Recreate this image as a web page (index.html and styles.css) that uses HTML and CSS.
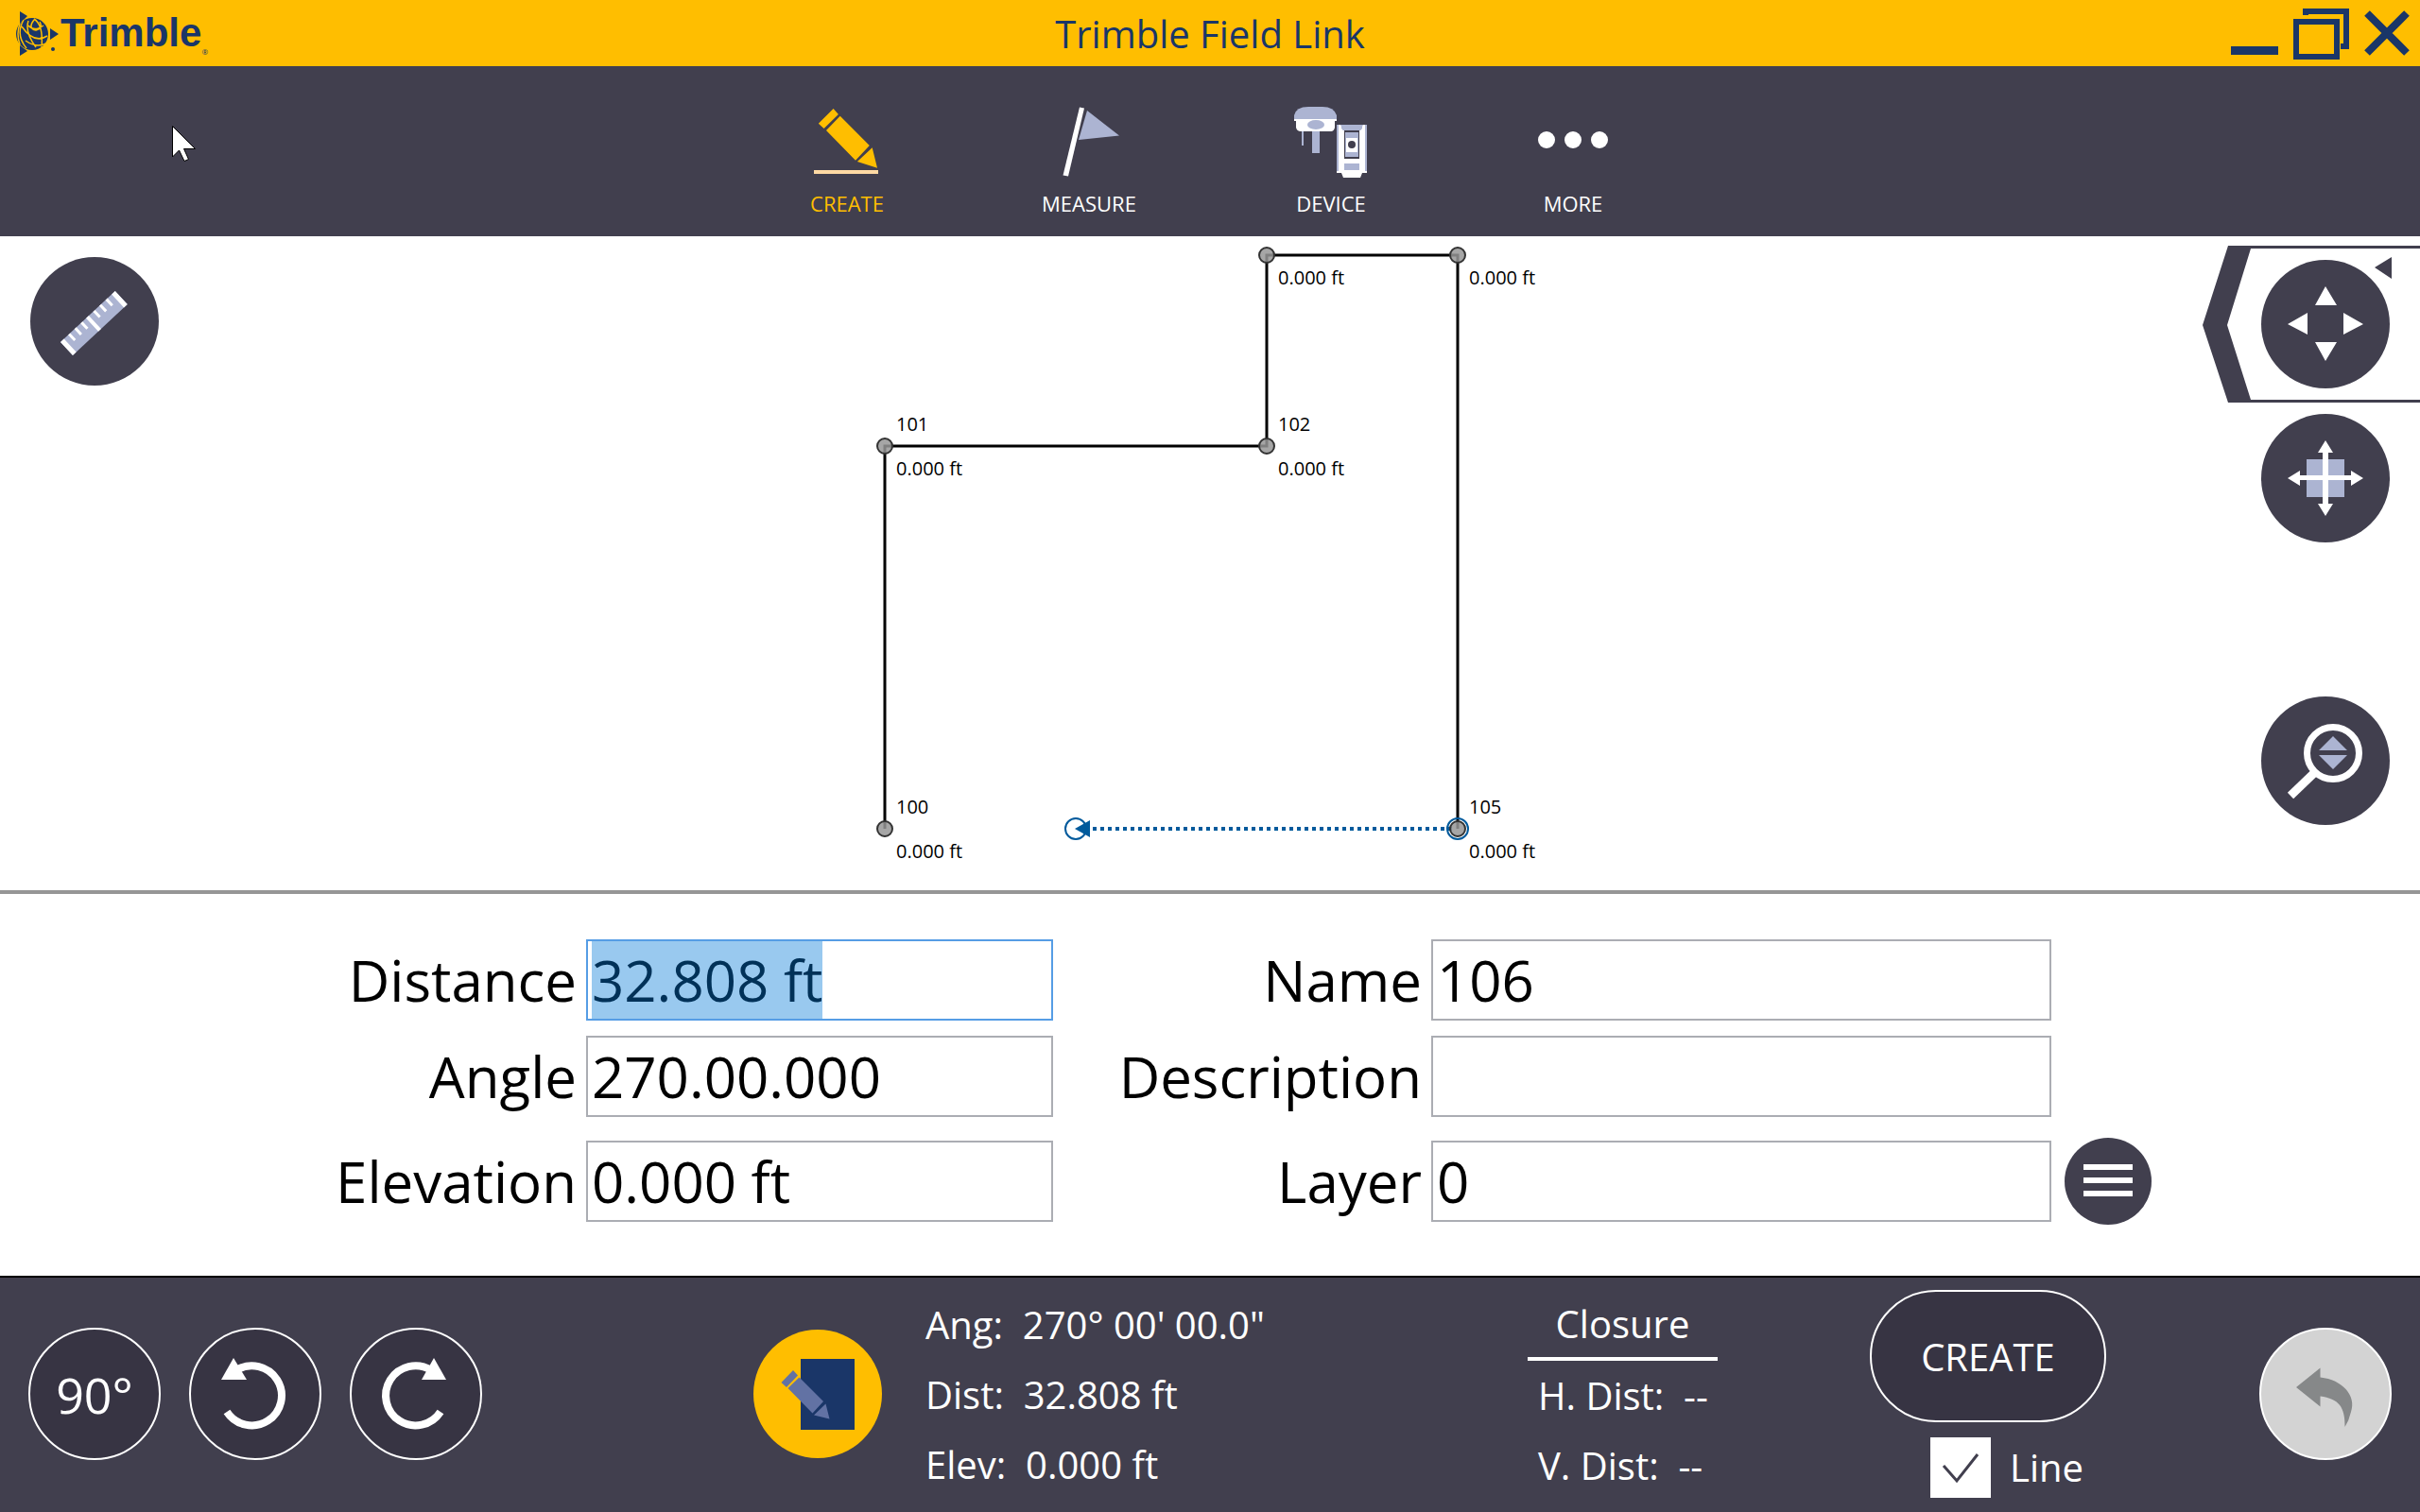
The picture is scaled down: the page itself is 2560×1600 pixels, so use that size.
FILE: index.html
```html
<!DOCTYPE html>
<html lang="en">
<head>
<meta charset="utf-8">
<title>Trimble Field Link</title>
<link rel="stylesheet" href="styles.css">
</head>
<body>
<header class="titlebar">
  <div class="brand">
    <svg class="brand-globe" width="48" height="50" viewBox="0 0 48 50" aria-hidden="true">
      <path class="navy" d="M5 2 13 7 5 15ZM46 26 37 20V32ZM5 49V38L13 44Z"/>
      <circle class="navy" cx="18" cy="26" r="17"/>
      <g class="globe-lines">
        <path d="M5 15Q1 26 5 37M9 11Q0 27 12 41M7 18Q20 37 34 28M11 33Q22 41 33 36M14 12Q10 24 22 40M14 17Q20 24 30 17M20 10Q30 16 28 40M20 11Q13 20 22 22Q30 20 26 13"/>
      </g>
      <circle class="navy" cx="40" cy="42" r="2"/>
    </svg>
    <span class="brand-name">Trimble</span><span class="brand-mark">®</span>
  </div>
  <h1 class="app-title">Trimble Field Link</h1>
  <div class="window-controls">
    <button class="window-button" aria-label="Minimize"><svg width="52" height="60" viewBox="0 0 52 60"><path class="navy" d="M0 44h50v9H0z"/></svg></button>
    <button class="window-button" aria-label="Restore"><svg width="60" height="60" viewBox="0 0 60 60"><g class="win-line"><path d="M3 18H46V55H3Z"/><path d="M13 11V7H56V44H50"/></g></svg></button>
    <button class="window-button" aria-label="Close"><svg width="50" height="60" viewBox="0 0 50 60"><path class="win-line close" d="M4 9 46 51M46 9 4 51"/></svg></button>
  </div>
</header>

<nav class="toolbar">
  <button class="nav-item active">
    <svg width="80" height="80" viewBox="0 0 80 80" fill="#ffbe00"><path d="M25.6 7 9.8 22.7 15.6 28 30.9 13ZM32.7 14.7 18 30 49 61.7 63.8 46ZM66.7 48.3 50.9 63 72 69.7Z"/><path fill="#fdd9a3" d="M5 72h68v4H5z"/></svg>
    <span>CREATE</span>
  </button>
  <button class="nav-item">
    <svg width="80" height="80" viewBox="0 0 80 80"><path fill="#fff" d="M30 5.500 35 6.500 18 78.500 12.500 77.500Z"/><path fill="#acb4d2" d="M38 9 72 35.500 29 40Z"/></svg>
    <span>MEASURE</span>
  </button>
  <button class="nav-item">
    <svg width="80" height="80" viewBox="0 0 80 80">
      <path fill="#acb4d2" d="M1 18V14Q3 5 16 5H31Q43 5 46 14V18Z"/>
      <path fill="#fff" d="M1 18H46V20H44V27Q43 31 40 31H8Q4 31 3 27V20H1Z"/>
      <ellipse fill="#acb4d2" cx="24" cy="24" rx="9" ry="5"/>
      <path fill="#acb4d2" d="M20 31h8v23h-8zM9 31h2v15H9z"/>
      <path fill="#acb4d2" d="M46 24H78V74H46Z"/>
      <path fill="#fff" d="M48 24H51V28L53 30H71L73 28V24H76V74H48Z"/>
      <path fill="#acb4d2" d="M50 24h24l-3 6H53zM54 31h16v29H54zM54 65h16v7H54z"/>
      <path fill="#fff" d="M56 38h12v15H56zM54 60h16v3H54z"/>
      <path fill="#413f4e" d="M54 30h16v2H54zM54 58h16v2H54zM54 32h1v26h-1zM69 32h1v26h-1z"/>
      <ellipse fill="#413f4e" cx="62" cy="45" rx="4" ry="4"/>
      <path fill="#fff" d="M46 73h32v2h-5l-2 5H53l-2-5h-5z"/>
    </svg>
    <span>DEVICE</span>
  </button>
  <button class="nav-item">
    <svg width="80" height="80" viewBox="0 0 80 80" fill="#fff"><circle cx="12" cy="40" r="9"/><circle cx="40" cy="40" r="9"/><circle cx="68" cy="40" r="9"/></svg>
    <span>MORE</span>
  </button>
  <svg class="pointer" width="26" height="39" viewBox="0 0 26 39" aria-hidden="true"><path d="M.5.5V33L7.500 26 13 37.500 17.500 35.500 12.500 24.500H24.500Z"/></svg>
</nav>

<main class="map">
  <div class="map-left">
    <button class="round" aria-label="Measure distance">
      <svg width="136" height="136" viewBox="0 0 136 136"><g transform="translate(32 90) rotate(-43)"><path fill="#acb4d2" d="M0 0h79v19H0z"/><path fill="#fff" d="M0 0h5v19H0zM74 0h5v19h-5zM37 0h4v19h-4zM11 0h3v9h-3zM20 0h3v9h-3zM29 0h3v9h-3zM47 0h3v9h-3zM56 0h3v9h-3zM65 0h3v9h-3z"/></g></svg>
    </button>
  </div>
  <svg class="plan" width="760" height="692" viewBox="0 0 760 692">
    <path class="plan-line" d="M36 627V222H440V20H642V627"/>
    <path class="plan-next" d="M636 627H253"/>
    <g class="plan-ring"><circle cx="238" cy="627" r="11"/><circle cx="642" cy="627" r="11"/></g>
    <path class="plan-arrow" d="M237 627 253 618V636Z"/>
    <g class="plan-point"><circle cx="36" cy="627" r="8"/><circle cx="36" cy="222" r="8"/><circle cx="440" cy="222" r="8"/><circle cx="440" cy="20" r="8"/><circle cx="642" cy="20" r="8"/><circle cx="642" cy="627" r="8"/></g>
    <g class="plan-text">
      <text x="48" y="611">100</text><text x="48" y="658">0.000 ft</text>
      <text x="48" y="206">101</text><text x="48" y="253">0.000 ft</text>
      <text x="452" y="206">102</text><text x="452" y="253">0.000 ft</text>
      <text x="452" y="51">0.000 ft</text>
      <text x="654" y="51">0.000 ft</text>
      <text x="654" y="611">105</text><text x="654" y="658">0.000 ft</text>
    </g>
  </svg>
  <div class="map-right">
    <div class="flyout">
      <svg class="flyout-frame" width="230" height="166" viewBox="0 0 230 166" fill="#413f4e" aria-hidden="true"><path d="M27 0H230V3H51L26 84 51 163H230V166H27L0 84ZM182 23 200 12V35Z"/></svg>
      <button class="round" aria-label="Pan">
        <svg width="136" height="136" viewBox="0 0 136 136" fill="#fff"><path d="M68 28 80 48H57ZM68 107 57 87H80ZM28 68 49 56V79ZM108 68 87 56V79Z"/></svg>
      </button>
    </div>
    <button class="round" aria-label="Zoom extents">
      <svg width="136" height="136" viewBox="0 0 136 136" fill="#fff"><path fill="#acb4d2" d="M48 48h40v40H48z"/><path d="M68 28 76 41H71V65H95V60L108 68 95 76V70H71V95H76L68 108 60 95H65V70H41V76L28 68 41 60V65H65V41H60Z"/></svg>
    </button>
    <button class="round zoom" aria-label="Zoom">
      <svg width="136" height="136" viewBox="0 0 136 136"><g fill="none" stroke="#fff"><circle cx="76" cy="60" r="27.500" stroke-width="7"/><path stroke-width="9" d="M31 105 56 81"/></g><path fill="#acb4d2" d="M76 42 91 57H61ZM76 77 61 62H91Z"/></svg>
    </button>
  </div>
</main>

<form class="fields">
  <label class="first" for="distance">Distance</label><input class="field" id="distance" value="32.808 ft" autofocus>
  <label for="name">Name</label><input class="field" id="name" value="106">
  <label class="first" for="angle">Angle</label><input class="field" id="angle" value="270.00.000">
  <label for="description">Description</label><input class="field" id="description">
  <label class="first" for="elevation">Elevation</label><input class="field" id="elevation" value="0.000 ft">
  <label for="layer">Layer</label><input class="field" id="layer" value="0">
  <button type="button" class="layers" aria-label="Layers">
    <svg width="92" height="92" viewBox="0 0 92 92" fill="#fff"><path d="M20 28h52v6H20zM20 42h52v6H20zM20 56h52v6H20z"/></svg>
  </button>
</form>

<footer class="actions">
  <div class="rotate">
    <button class="ring">90°</button>
    <button class="ring" aria-label="Rotate counterclockwise">
      <svg width="136" height="136" viewBox="2 2 136 136"><path fill="none" stroke="#fff" stroke-width="8" d="M40 89A31.500 31.500 0 1 0 50 45"/><path fill="#fff" d="M47 32 34 55H61Z"/></svg>
    </button>
    <button class="ring" aria-label="Rotate clockwise">
      <svg width="136" height="136" viewBox="2 2 136 136"><path fill="none" stroke="#fff" stroke-width="8" d="M96 89A31.500 31.500 0 1 1 86 45"/><path fill="#fff" d="M89 32 102 55H76Z"/></svg>
    </button>
  </div>
  <div class="readout">
    <button class="sketch" aria-label="Sketch mode">
      <svg width="136" height="136" viewBox="0 0 136 136"><path fill="#1a3668" d="M50 31h57v75H50z"/><path fill="#ffbe00" d="M47 47 50 50 37 64 34 61Z"/><path fill="#6272a4" d="M42 43 29.500 56 35 61 47 48.500ZM48.500 50.500 36.500 62 62.500 88.500 74 76ZM76.500 78.500 64 90.500 80.500 94.500Z"/></svg>
    </button>
    <div class="lines">
      <div class="line">Ang:  270° 00' 00.0"</div>
      <div class="line">Dist:  32.808 ft</div>
      <div class="line">Elev:  0.000 ft</div>
    </div>
  </div>
  <div class="closure">
    <h2>Closure</h2>
    <div class="line">H. Dist:  --</div>
    <div class="line">V. Dist:  --</div>
  </div>
  <div class="create">
    <button class="create-button">CREATE</button>
    <label class="line-option"><input type="checkbox" class="check" checked>Line</label>
  </div>
  <button class="ring undo" aria-label="Undo">
    <svg width="136" height="136" viewBox="2 2 136 136"><path fill="#868889" d="M39 63 64.500 42.500V52.500C88 55 103 72 97 89Q95 98 90.500 105C91 84 84 75 64.500 72.500V83.500Z"/></svg>
  </button>
</footer>
<script src="app.js"></script>
</body>
</html>
```
FILE: styles.css
```css
* { box-sizing: border-box; }

body {
  margin: 0;
  min-height: 100vh;
  display: flex;
  flex-direction: column;
  background: #fff;
  color: #000;
  font-family: "Open Sans", "Noto Sans", sans-serif;
  font-size: 40px;
}

button {
  padding: 0;
  border: 0;
  background: none;
  color: inherit;
  font: inherit;
}

svg { display: block; }

.navy { fill: #1a3668; }

/* Title bar */
.titlebar {
  height: 70px;
  display: grid;
  grid-template-columns: 1fr auto 1fr;
  align-items: center;
  padding: 0 10px;
  background: #ffbe00;
  color: #1a3668;
}
.brand { display: flex; align-items: center; padding-left: 6px; }
.globe-lines path { fill: none; stroke: #ffbe00; stroke-width: 1.5; }
.brand-name {
  font: bold 42px/50px "Liberation Sans", sans-serif;
}
.brand-mark {
  align-self: flex-end;
  font-size: 8px;
}
.app-title { margin: 0; font-size: 40px; font-weight: 400; }
.window-controls { display: flex; justify-content: flex-end; gap: 14px; }
.win-line { fill: none; stroke: #1a3668; stroke-width: 6; }
.close { stroke-width: 8; }

/* Main navigation */
.toolbar {
  position: relative;
  display: flex;
  justify-content: center;
  background: #413f4e;
  color: #fff;
}
.nav-item {
  width: 256px;
  padding: 38px 0 20px;
  display: flex;
  flex-direction: column;
  align-items: center;
  gap: 12px;
  font-size: 22px;
  line-height: 30px;
}
.active { color: #ffbe00; }
.pointer { position: absolute; left: 182px; top: 63px; }
.pointer path { fill: #fff; stroke: #000; }

/* Map */
.map {
  flex: 1;
  display: grid;
  grid-template-columns: 1fr auto 1fr;
  border-bottom: 4px solid #969696;
}
.map-left { padding: 22px 32px; }
.map-right {
  display: flex;
  flex-direction: column;
  align-items: flex-end;
  gap: 12px;
  padding: 10px 32px 69px 0;
}
.round {
  width: 136px;
  height: 136px;
  border-radius: 50%;
  background: #413f4e;
}
.flyout {
  position: relative;
  padding: 15px 0;
}
.flyout-frame { position: absolute; right: -32px; top: 0; }
.flyout .round { position: relative; display: block; }
.zoom { margin-top: auto; }

.plan-line { fill: none; stroke: #000; stroke-width: 3; }
.plan-next { stroke: #005a9c; stroke-width: 4; stroke-dasharray: 4 4; }
.plan-ring { fill: none; stroke: #005a9c; stroke-width: 2; }
.plan-arrow { fill: #005a9c; }
.plan-point { fill: #969696; fill-opacity: .85; stroke: #333; stroke-width: 2; }
.plan-text { font-size: 20px; }

/* Entry fields */
.fields {
  display: grid;
  grid-template-columns: 612fr 494fr 384fr 656fr 382fr;
  grid-template-rows: 86px 86px 104px;
  gap: 16px 8px;
  align-items: center;
  padding: 48px 0;
  font-size: 60px;
}
.fields label { padding-right: 2px; text-align: right; }
.fields .first { grid-column: 1; }
.field {
  width: 100%;
  min-width: 0;
  height: 86px;
  padding: 0 4px;
  border: 2px solid #abadb3;
  border-radius: 0;
  outline: 0;
  background: #fff;
  color: #000;
  font: inherit;
}
.field:focus { border-color: #569de5; }
.field::selection { background: #99c9ef; color: #003158; }
.layers {
  width: 92px;
  height: 92px;
  margin-left: 6px;
  border-radius: 50%;
  background: #413f4e;
}

/* Bottom bar */
.actions {
  height: 250px;
  display: grid;
  grid-template-columns: 767fr 819fr 362fr 412fr 140px;
  align-items: center;
  padding: 0 30px 2px;
  border-top: 2px solid #000;
  background: #413f4e;
  color: #fff;
}
.rotate { display: flex; gap: 30px; }
.ring {
  width: 140px;
  height: 140px;
  border: 2px solid #fff;
  border-radius: 50%;
  background: #373443;
  font-size: 52px;
}
.undo { background: #d3d3d3; }
.readout { display: flex; align-items: center; gap: 46px; }
.sketch {
  width: 136px;
  height: 136px;
  border-radius: 50%;
  background: #ffbe00;
}
.lines, .closure { padding-top: 2px; }
.line { line-height: 74px; white-space: pre; }
.closure { width: 201px; }
.closure .line { padding-left: 11px; }
.closure h2 {
  margin: 0;
  border-bottom: 4px solid #fff;
  font-size: 40px;
  font-weight: 400;
  line-height: 71px;
  text-align: center;
}
.create {
  width: 250px;
  display: flex;
  flex-direction: column;
  gap: 16px;
}
.create-button {
  width: 250px;
  height: 140px;
  border: 2px solid #fff;
  border-radius: 70px;
  background: #373443;
}
.line-option {
  display: flex;
  align-items: center;
  gap: 20px;
  padding-left: 64px;
  line-height: 64px;
}
.check {
  appearance: none;
  width: 64px;
  height: 64px;
  margin: 0;
  background: #fff;
}
.check:checked {
  background: #fff url("data:image/svg+xml,%3Csvg xmlns='http://www.w3.org/2000/svg' viewBox='0 0 64 64'%3E%3Cpath d='M14 30 28 46 50 18' fill='none' stroke='%23413f4e' stroke-width='3'/%3E%3C/svg%3E");
}
```
FILE: app.js
```js
const distance = document.getElementById('distance');
distance.focus();
distance.select();
```
